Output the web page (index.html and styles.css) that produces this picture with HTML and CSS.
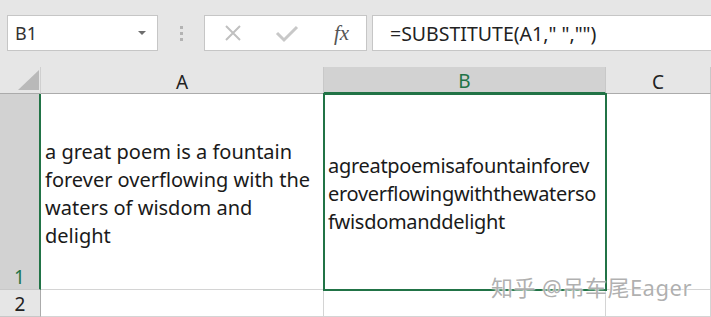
FILE: index.html
```html
<!DOCTYPE html>
<html lang="en">
<head>
    <meta charset="UTF-8">
    <title>Excel - SUBSTITUTE</title>
    <link rel="stylesheet" href="styles.css">
</head>
<body>
    <div class="toolbar">
        <div class="namebox">
            <span>B1</span>
            <span class="caret"></span>
        </div>
        <div class="grip"><i></i><i></i><i></i></div>
        <div class="fxbox">
            <svg class="icon" width="20" height="20" viewBox="0 0 20 20">
                <path d="M3 3 L17 17 M17 3 L3 17" stroke="#c0c0c0" stroke-width="2" fill="none"/>
            </svg>
            <svg class="icon" width="24" height="20" viewBox="0 0 24 20">
                <path d="M2 10 L9 17 L22 4" stroke="#c8c8c8" stroke-width="3" fill="none"/>
            </svg>
            <span class="fx">fx</span>
        </div>
        <div class="formula">=SUBSTITUTE(A1," ","")</div>
    </div>

    <div class="sheet">
        <div class="corner"><span class="tri"></span></div>
        <div class="colhead">A</div>
        <div class="colhead active">B</div>
        <div class="colhead">C</div>

        <div class="rowhead active">1</div>
        <div class="cell">a great poem is a fountain<br>forever overflowing with the<br>waters of wisdom and<br>delight</div>
        <div class="cell selected">agreatpoemisafountainforev<br>eroverflowingwiththewaterso<br>fwisdomanddelight</div>
        <div class="cell"></div>

        <div class="rowhead">2</div>
        <div class="cell"></div>
        <div class="cell"></div>
        <div class="cell"></div>

        <div class="watermark">知乎 @吊车尾Eager</div>
    </div>
</body>
</html>
```

FILE: styles.css
```css
body {
    margin: 0;
    background: #e6e6e6;
    font-family: "Noto Sans", "Noto Sans CJK SC", sans-serif;
    color: #222;
    overflow: hidden;
}
.toolbar {
    display: flex;
    padding: 15px 0 0 7px;
    height: 36px;
}
.namebox {
    background: white;
    border: 1px solid #c6c6c6;
    display: flex;
    align-items: center;
    justify-content: space-between;
    padding: 0 11px 0 7px;
    box-sizing: border-box;
    width: 151px;
    height: 36px;
    font-size: 18px;
    color: #333;
}
.caret {
    width: 0;
    height: 0;
    border-left: 4px solid transparent;
    border-right: 4px solid transparent;
    border-top: 4px solid #6e6e6e;
}
.grip {
    width: 46px;
    display: flex;
    flex-direction: column;
    align-items: center;
    justify-content: center;
    gap: 3px;
}
.grip i {
    width: 3px;
    height: 3px;
    background: #b3b3b3;
}
.fxbox {
    width: 163px;
    height: 36px;
    box-sizing: border-box;
    background: white;
    border: 1px solid #c6c6c6;
    display: flex;
    align-items: center;
    padding: 0 0 0 18px;
    gap: 32px;
}
.fx {
    font-family: "Liberation Serif", serif;
    font-style: italic;
    font-size: 21px;
    color: #555;
    margin-left: 3px;
}
.formula {
    flex: 1;
    margin-left: 5px;
    height: 36px;
    box-sizing: border-box;
    background: white;
    border: 1px solid #c6c6c6;
    border-right: none;
    padding-left: 17px;
    display: flex;
    align-items: center;
    font-size: 19.5px;
    color: #222;
}
.sheet {
    position: relative;
    margin-top: 16px;
    display: grid;
    grid-template-columns: 41px 283px 282px 1fr;
    grid-template-rows: 27px 196px 27px;
    background: white;
}
.corner {
    background: #e6e6e6;
    border-right: 1px solid #d0d0d0;
    border-bottom: 1px solid #ababab;
    position: relative;
}
.tri {
    position: absolute;
    right: 1px;
    bottom: 3px;
    width: 21px;
    height: 20px;
    background: #b9b9b9;
    clip-path: polygon(100% 0, 100% 100%, 0 100%);
}
.colhead {
    background: #e6e6e6;
    border-right: 1px solid #c8c8c8;
    border-bottom: 1px solid #ababab;
    display: flex;
    align-items: center;
    justify-content: center;
    font-size: 19px;
    color: #222;
    padding-top: 3px;
}
.colhead.active {
    background: #d2d2d2;
    color: #217346;
    border-bottom: 2px solid #217346;
}
.rowhead {
    background: #e6e6e6;
    border-right: 1px solid #ababab;
    border-bottom: 1px solid #c8c8c8;
    display: flex;
    align-items: flex-end;
    justify-content: center;
    font-size: 19px;
    line-height: 24px;
    color: #222;
}
.rowhead.active {
    background: #d2d2d2;
    color: #217346;
    border-right: 2px solid #217346;
}
.cell {
    border-right: 1px solid #d4d4d4;
    border-bottom: 1px solid #d4d4d4;
    display: flex;
    align-items: center;
    padding: 5px 0 0 4px;
    font-size: 20px;
    line-height: 28px;
    color: #1a1a1a;
    white-space: nowrap;
    overflow: hidden;
}
.cell.selected {
    position: relative;
    outline: 2px solid #217346;
    outline-offset: -1px;
    z-index: 1;
    letter-spacing: -0.3px;
}
.watermark {
    position: absolute;
    right: 19px;
    bottom: 15px;
    z-index: 2;
    font-size: 22px;
    color: rgba(150, 150, 150, 0.75);
    text-shadow: 0 0 2px white, 0 0 2px white;
    letter-spacing: 0.5px;
}
```
